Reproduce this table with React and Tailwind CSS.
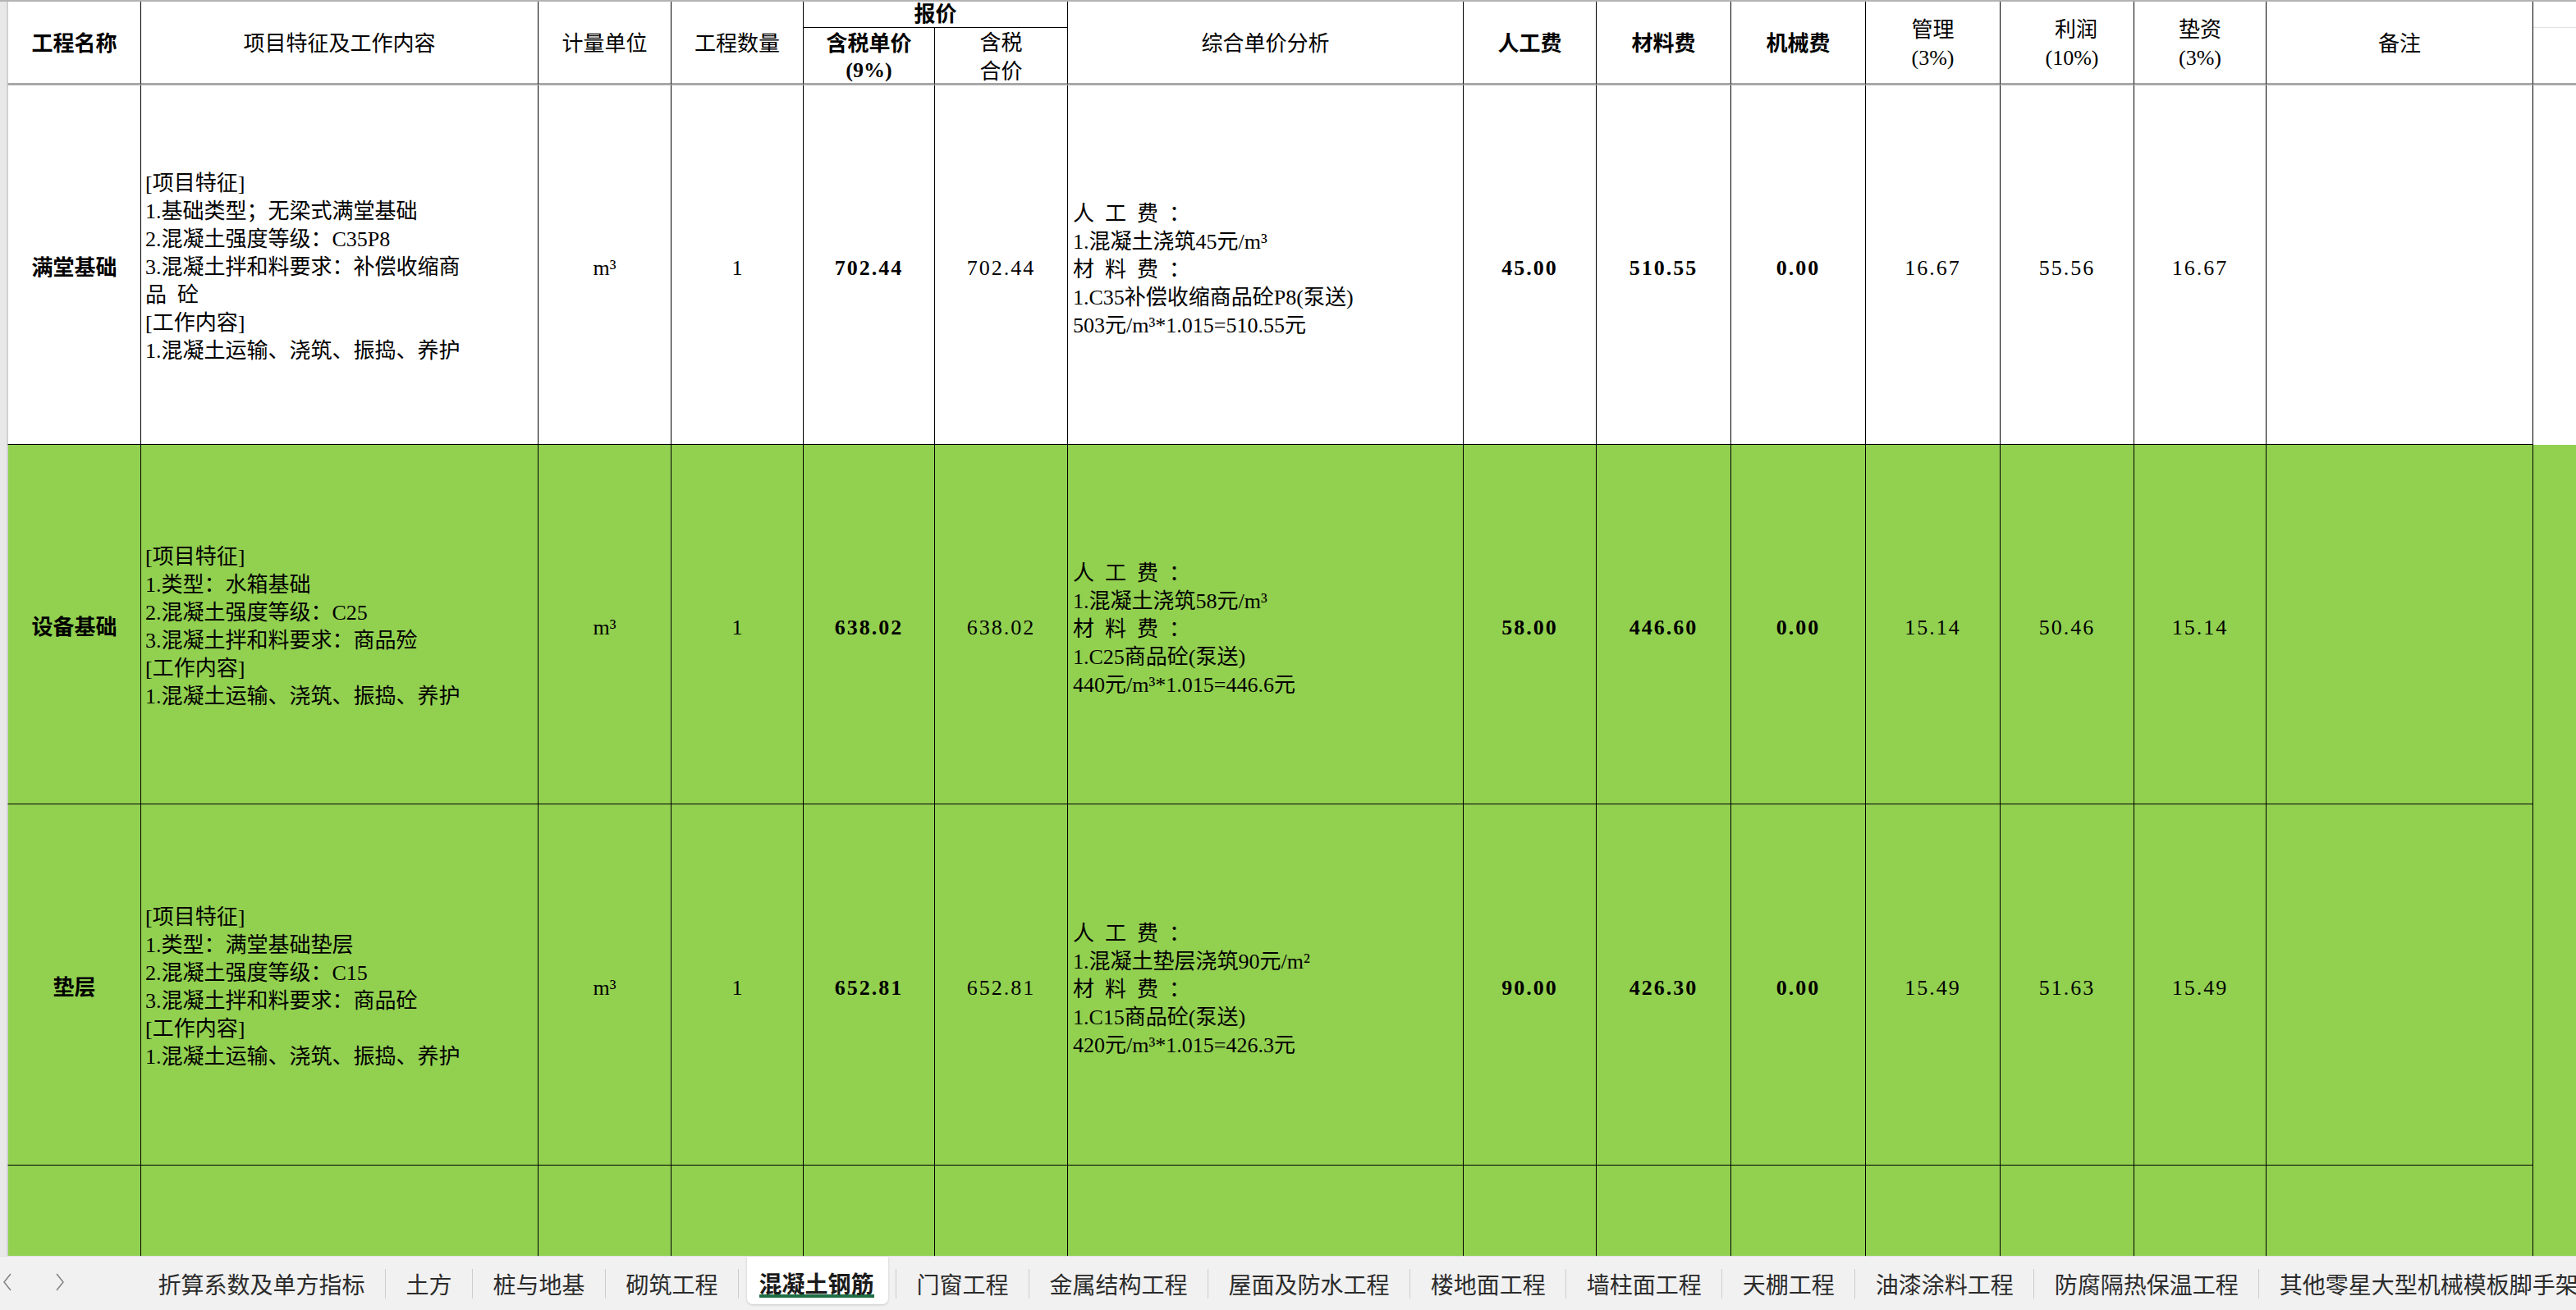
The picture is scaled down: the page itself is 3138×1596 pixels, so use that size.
import React from 'react';

const rows = [
  {
    bg: 'bg-white',
    name: '满堂基础',
    desc: ['[项目特征]', '1.基础类型；无梁式满堂基础', '2.混凝土强度等级：C35P8', '3.混凝土拌和料要求：补偿收缩商', '品\u2002砼', '[工作内容]', '1.混凝土运输、浇筑、振捣、养护'],
    price: '702.44',
    analysis: ['人\u2002工\u2002费\u2002：', '1.混凝土浇筑45元/m³', '材\u2002料\u2002费\u2002：', '1.C35补偿收缩商品砼P8(泵送)', '503元/m³*1.015=510.55元'],
    labor: '45.00',
    material: '510.55',
    mgmt: '16.67',
    profit: '55.56',
    advance: '16.67',
  },
  {
    bg: 'bg-[#92d050]',
    name: '设备基础',
    desc: ['[项目特征]', '1.类型：水箱基础', '2.混凝土强度等级：C25', '3.混凝土拌和料要求：商品殓', '[工作内容]', '1.混凝土运输、浇筑、振捣、养护'],
    price: '638.02',
    analysis: ['人\u2002工\u2002费\u2002：', '1.混凝土浇筑58元/m³', '材\u2002料\u2002费\u2002：', '1.C25商品砼(泵送)', '440元/m³*1.015=446.6元'],
    labor: '58.00',
    material: '446.60',
    mgmt: '15.14',
    profit: '50.46',
    advance: '15.14',
  },
  {
    bg: 'bg-[#92d050]',
    name: '垫层',
    desc: ['[项目特征]', '1.类型：满堂基础垫层', '2.混凝土强度等级：C15', '3.混凝土拌和料要求：商品砼', '[工作内容]', '1.混凝土运输、浇筑、振捣、养护'],
    price: '652.81',
    analysis: ['人\u2002工\u2002费\u2002：', '1.混凝土垫层浇筑90元/m²', '材\u2002料\u2002费\u2002：', '1.C15商品砼(泵送)', '420元/m³*1.015=426.3元'],
    labor: '90.00',
    material: '426.30',
    mgmt: '15.49',
    profit: '51.63',
    advance: '15.49',
  },
];

const tabs = ['折算系数及单方指标', '土方', '桩与地基', '砌筑工程', '混凝土钢筋', '门窗工程', '金属结构工程', '屋面及防水工程', '楼地面工程', '墙柱面工程', '天棚工程', '油漆涂料工程', '防腐隔热保温工程', '其他零星大型机械模板脚手架'];

function Head({ children, bold, className = '' }) {
  return (
    <div className={`row-span-2 flex items-center justify-center text-center leading-[34px] border-r border-r-black border-b-[3px] border-b-[#a8a8a8] pt-[4px] ${bold ? 'font-bold' : ''} ${className}`}>
      <div>{children}</div>
    </div>
  );
}

function Cell({ children, className = '' }) {
  return (
    <div className={`flex items-center justify-center border-r border-b border-black pt-[7px] ${className}`}>
      {children}
    </div>
  );
}

// numbers get a little tracking to mimic the half-width SimSun digits
function Num({ children, bold }) {
  return <span className={`tracking-[2px] ${bold ? 'font-bold' : ''}`}>{children}</span>;
}

function DataRow({ row }) {
  return (
    <>
      <Cell className={`${row.bg} font-bold border-l border-l-[#cfcfcf]`}>{row.name}</Cell>
      <Cell className={`${row.bg} justify-start pl-[5px]`}>
        <div className="whitespace-pre leading-[34px]">
          {row.desc.map((l, i) => <div key={i}>{l}</div>)}
        </div>
      </Cell>
      <Cell className={row.bg}>m³</Cell>
      <Cell className={row.bg}>1</Cell>
      <Cell className={row.bg}><Num bold>{row.price}</Num></Cell>
      <Cell className={row.bg}><Num>{row.price}</Num></Cell>
      <Cell className={`${row.bg} justify-start pl-[6px] pt-[12px]`}>
        <div className="whitespace-pre leading-[34px]">
          {row.analysis.map((l, i) => <div key={i}>{l}</div>)}
        </div>
      </Cell>
      <Cell className={row.bg}><Num bold>{row.labor}</Num></Cell>
      <Cell className={row.bg}><Num bold>{row.material}</Num></Cell>
      <Cell className={row.bg}><Num bold>0.00</Num></Cell>
      <Cell className={row.bg}><Num>{row.mgmt}</Num></Cell>
      <Cell className={row.bg}><Num>{row.profit}</Num></Cell>
      <Cell className={row.bg}><Num>{row.advance}</Num></Cell>
      <Cell className={row.bg} />
      <div className={row.bg} />
    </>
  );
}

function Arrow({ flip }) {
  return (
    <svg width="12" height="22" viewBox="0 0 12 22" className={flip ? 'rotate-180' : ''}>
      <polyline points="10,1 2,11 10,21" fill="none" stroke="#7d7d7d" strokeWidth="1.4" />
    </svg>
  );
}

export default function App() {
  return (
    <div className="w-[3138px] h-[1596px] overflow-hidden bg-white text-black text-[26px] font-['Liberation_Serif','Noto_Sans_CJK_SC',serif]">
      <div className="flex h-[1530px] overflow-hidden border-t-2 border-[#b3b3b3]">
        <div className="w-[9px] shrink-0 bg-[#e8e8e8] border-r border-[#d4d4d4]" />
        <div className="grid flex-1 grid-cols-[163px_484px_162px_161px_160px_162px_482px_162px_164px_164px_164px_163px_161px_325px_1fr] grid-rows-[32px_70px_438px_438px_440px_438px]">
          <Head bold className="border-l border-l-[#cfcfcf]">工程名称</Head>
          <Head>项目特征及工作内容</Head>
          <Head>计量单位</Head>
          <Head>工程数量</Head>
          <div className="col-span-2 flex items-center justify-center font-bold border-r border-b border-black">报价</div>
          <Head>综合单价分析</Head>
          <Head bold>人工费</Head>
          <Head bold>材料费</Head>
          <Head bold>机械费</Head>
          <Head>管理<br />(3%)</Head>
          <Head className="pl-[22px]">利润<br /><span className="-ml-[10px]">(10%)</span></Head>
          <Head>垫资<br />(3%)</Head>
          <Head>备注</Head>
          <div className="row-span-2 border-b-[3px] border-b-[#a8a8a8]">
            <div className="h-[32px] border-b border-[#e2e2e2]" />
          </div>
          <div className="flex items-center justify-center text-center leading-[32px] font-bold border-r border-r-black border-b-[3px] border-b-[#a8a8a8] pt-[4px]">
            <div>含税单价<br />(9%)</div>
          </div>
          <div className="flex items-center justify-center text-center leading-[35px] border-r border-r-black border-b-[3px] border-b-[#a8a8a8] pt-[4px]">
            <div>含税<br />合价</div>
          </div>
          {rows.map((r, i) => <DataRow key={i} row={r} />)}
          {Array.from({ length: 14 }).map((_, i) => (
            <div key={i} className={`bg-[#92d050] border-r border-b border-black ${i === 0 ? 'border-l border-l-[#cfcfcf]' : ''}`} />
          ))}
          <div className="bg-[#92d050]" />
        </div>
      </div>
      <div className="flex h-[66px] items-center border-t border-[#e4dfe4] bg-[#f1f1f1] font-['Noto_Sans_CJK_SC','Noto_Sans',sans-serif] text-[28px] text-[#2b2b2b]">
        <div className="flex w-[168px] shrink-0 items-center self-stretch pl-[3px] pb-[4px]">
          <Arrow />
          <div className="ml-[52px]"><Arrow flip /></div>
        </div>
        {tabs.map((t, i) => {
          const active = t === '混凝土钢筋';
          return (
            <React.Fragment key={t}>
              {i > 0 && <div className="h-[36px] w-px shrink-0 bg-[#cdcdcd]" />}
              {active ? (
                <div className="mx-[9.5px] flex h-[58px] shrink-0 items-center self-start rounded-b-[7px] bg-white pl-[15px] pr-[17px] pt-[9px] shadow-[0_1px_3px_rgba(0,0,0,0.18)]">
                  <span className="whitespace-nowrap border-b-4 border-[#1f6f45] font-bold leading-[28px] text-[#1a1a1a]">{t}</span>
                </div>
              ) : (
                <div className="shrink-0 whitespace-nowrap px-[24.5px] leading-[28px]">{t}</div>
              )}
            </React.Fragment>
          );
        })}
      </div>
    </div>
  );
}
